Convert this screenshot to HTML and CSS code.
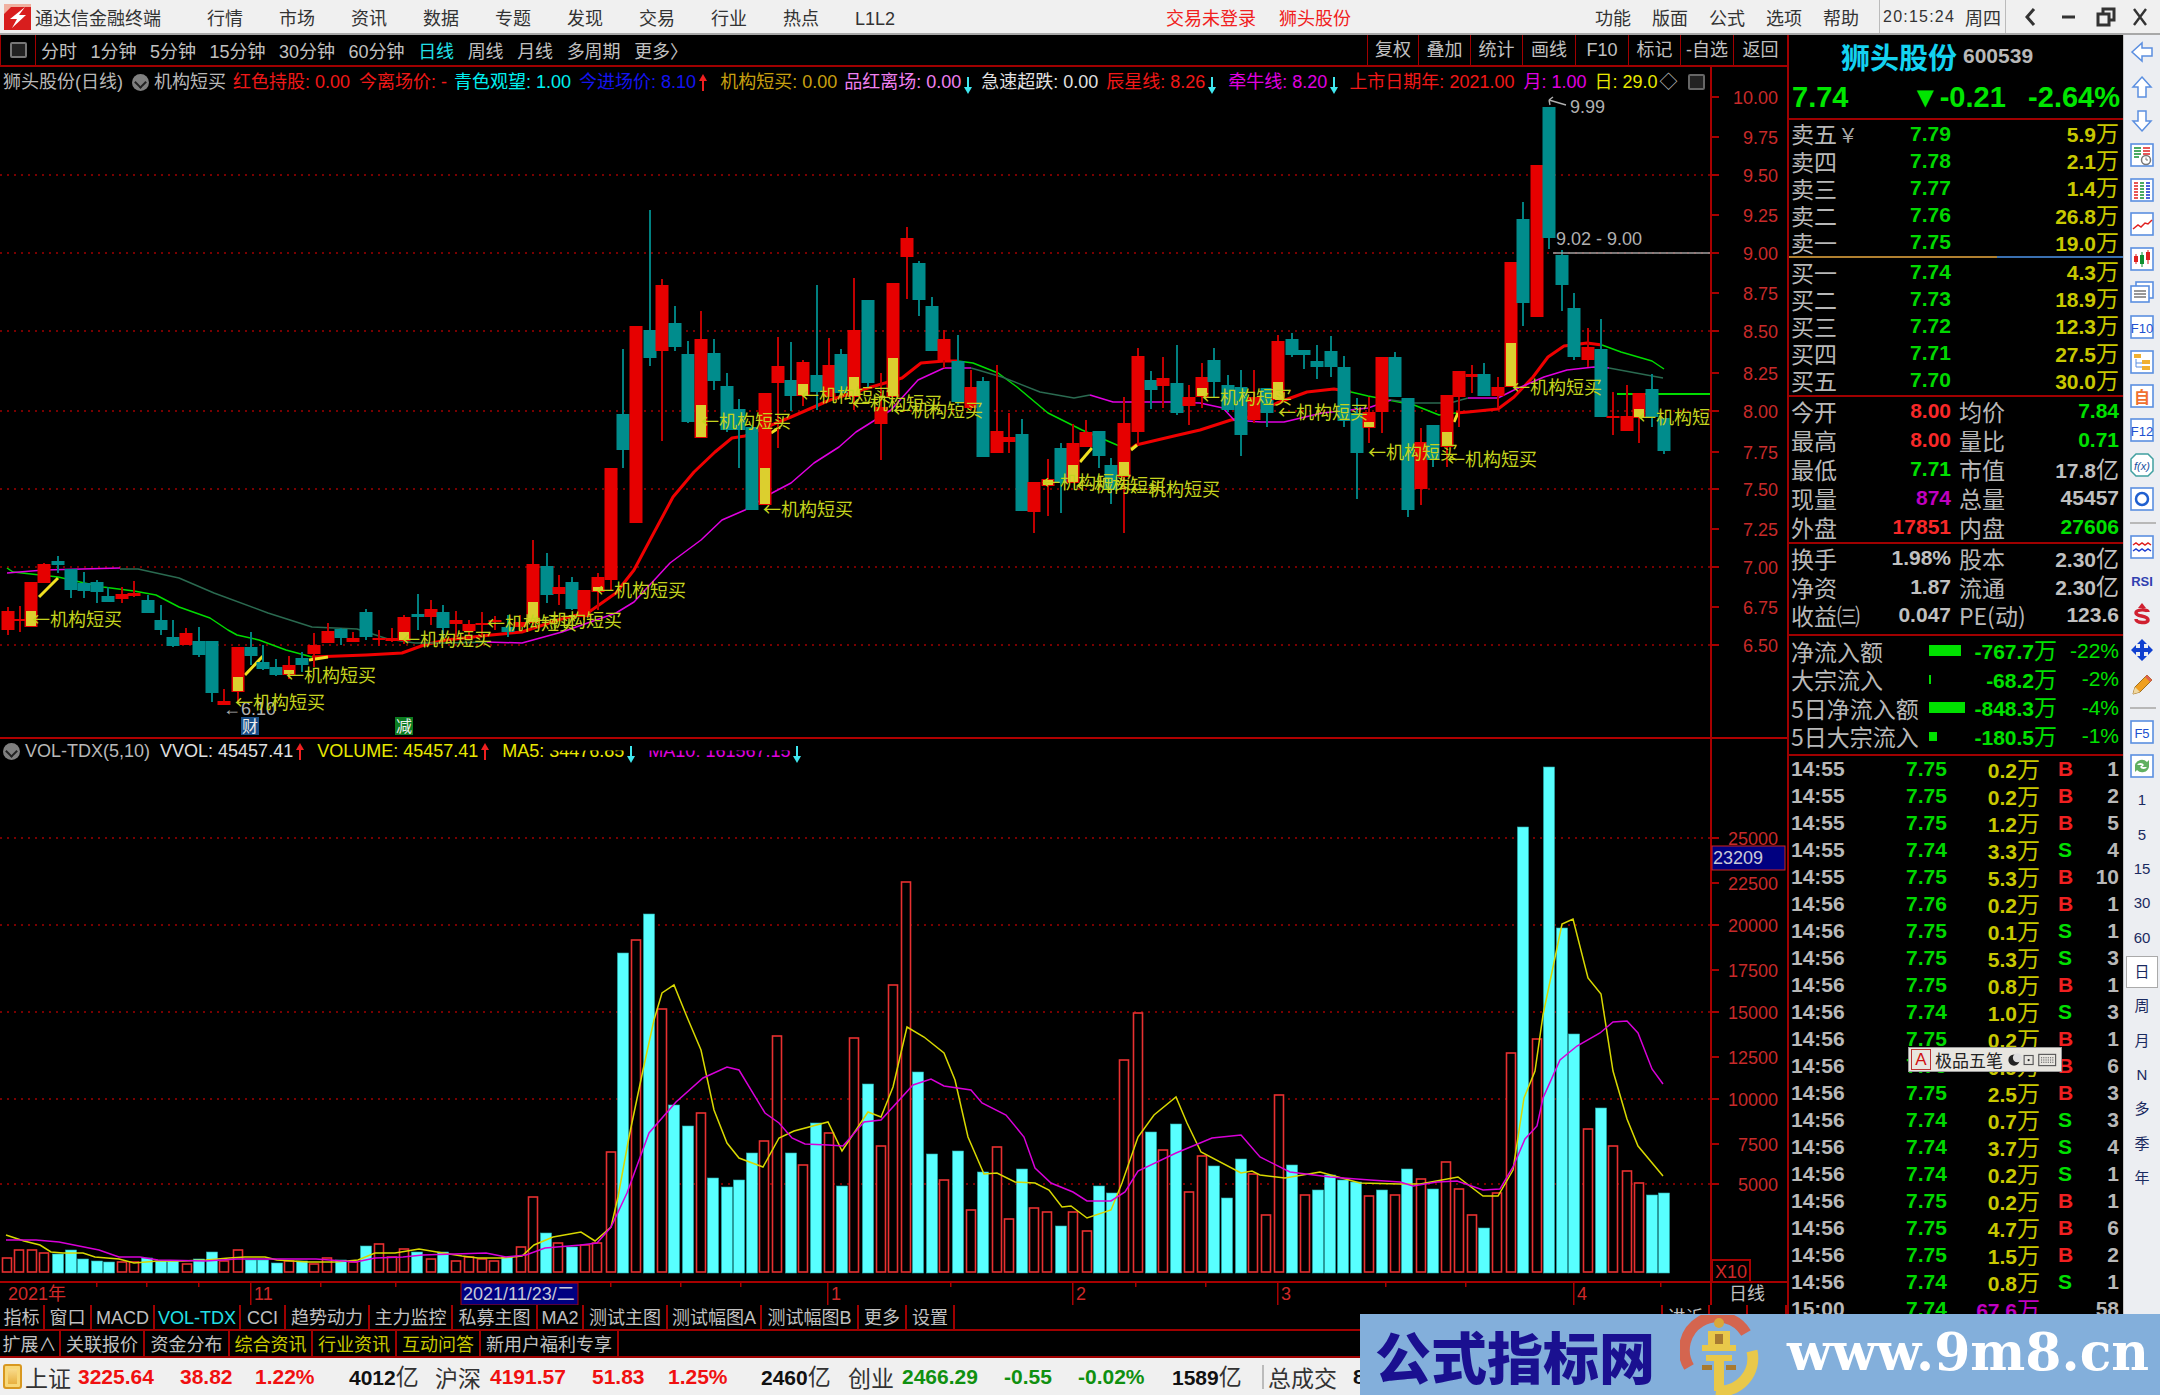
FILE: index.html
```html
<!DOCTYPE html>
<html lang="zh-CN">
<head>
<meta charset="utf-8">
<title>通达信金融终端</title>
<link rel="stylesheet" href="styles.css">
</head>
<body>
<header class="titlebar">
  <svg class="logo" viewBox="0 0 27 26"><rect width="27" height="26" fill="#d81e1e"/><path d="M0 0h27v3H7L0 10z" fill="#f0b0a0"/><path d="M21 3 6 15l7 0-5 9 14-13-7 0z" fill="#fff"/></svg>
  <span class="app">通达信金融终端</span>
  <nav class="menu"><span>行情</span><span>市场</span><span>资讯</span><span>数据</span><span>专题</span><span>发现</span><span>交易</span><span>行业</span><span>热点</span><span>L1L2</span></nav>
  <div class="alerts"><span>交易未登录</span><span>狮头股份</span></div>
  <nav class="menu right"><span>功能</span><span>版面</span><span>公式</span><span>选项</span><span>帮助</span></nav>
  <div class="clock"><span class="time">20:15:24</span><span>周四</span></div>
  <div class="winctl">
    <svg viewBox="0 0 130 24"><path d="M16 4 9 12l7 8" fill="none" stroke="#333" stroke-width="3"/><path d="M44 12h13" stroke="#333" stroke-width="3"/><path d="M80 9h11v11H80z M85 9V4h11v11h-5" fill="none" stroke="#333" stroke-width="3"/><path d="M116 4l12 16M128 4l-12 16" stroke="#333" stroke-width="2.4"/></svg>
  </div>
</header>

<div class="body-row">
  <section class="workspace">
    <div class="toolbar">
      <div class="tb-icon"><i></i></div>
      <div class="periods"><span>分时</span><span>1分钟</span><span>5分钟</span><span>15分钟</span><span>30分钟</span><span>60分钟</span><span class="on">日线</span><span>周线</span><span>月线</span><span>多周期</span><span>更多〉</span></div>
      <div class="tools"><span>复权</span><span>叠加</span><span>统计</span><span>画线</span><span>F10</span><span>标记</span><span>-自选</span><span>返回</span></div>
    </div>

    <div class="pane pane-main">
      <svg id="main" class="chart-main" viewBox="0 67 1787 670"></svg>
      <div class="legend">
        <span class="c-g l0">狮头股份(日线)</span><b class="dd"></b><span class="c-g">机构短买</span>
        <span class="c-r m7">红色持股: 0.00</span><span class="c-r m9">今离场价: -</span>
        <span class="c-c m7">青色观望: 1.00</span><span class="c-b m8">今进场价: 8.10</span><em class="up"></em>
        <span class="c-o m12">机构短买: 0.00</span><span class="c-p m7">品红离场: 0.00</span><em class="dn"></em>
        <span class="c-w m8">急速超跌: 0.00</span><span class="c-r m8">辰星线: 8.26</span><em class="dn"></em>
        <span class="c-m m11">牵牛线: 8.20</span><em class="dn"></em><span class="c-r m10">上市日期年: 2021.00</span>
        <span class="c-m m9">月: 1.00</span><span class="c-y m8">日: 29.0</span><span class="c-g m2">◇</span><b class="mini"><i></i></b>
      </div>
    </div>

    <div class="pane pane-vol">
      <svg id="vol" class="chart-vol" viewBox="0 739 1787 566"></svg>
      <div class="legend vol-legend">
        <b class="dd"></b><span class="c-g">VOL-TDX(5,10)</span>
        <span class="c-w m10">VVOL: 45457.41</span><em class="up"></em>
        <span class="c-y m12">VOLUME: 45457.41</span><em class="up"></em>
        <span class="c-y m12">MA5: <u class="cut">34476.85</u></span><em class="dn"></em>
        <span class="c-m m12"><u class="cut">MA10: 161567.15</u></span><em class="dn"></em>
      </div>
    </div>

    <div class="tabs tabs-a">
      <span>指标</span><span>窗口</span><span>MACD</span><span class="on">VOL-TDX</span><span>CCI</span><span>趋势动力</span><span>主力监控</span><span>私募主图</span><span>MA2</span><span>测试主图</span><span>测试幅图A</span><span>测试幅图B</span><span>更多</span><span>设置</span><span class="blank"></span><span>讲诉</span><span></span><span></span>
    </div>
    <div class="tabs tabs-b">
      <span>扩展∧</span><span>关联报价</span><span>资金分布</span><span class="hot">综合资讯</span><span class="hot">行业资讯</span><span class="hot">互动问答</span><span>新用户福利专享</span>
    </div>
  </section>

  <aside class="panel">
    <div class="stock"><span class="name">狮头股份</span><span class="code">600539</span></div>
    <div class="quote sec"><span>7.74</span><span class="chg">▼-0.21</span><span>-2.64%</span></div>

    <div class="book">
      <div class="bk"><span class="lb">卖五<small>￥</small></span><span class="pr">7.79</span><span class="am">5.9<i>万</i></span></div>
      <div class="bk"><span class="lb">卖四</span><span class="pr">7.78</span><span class="am">2.1<i>万</i></span></div>
      <div class="bk"><span class="lb">卖三</span><span class="pr">7.77</span><span class="am">1.4<i>万</i></span></div>
      <div class="bk"><span class="lb">卖二</span><span class="pr">7.76</span><span class="am">26.8<i>万</i></span></div>
      <div class="bk"><span class="lb">卖一</span><span class="pr">7.75</span><span class="am">19.0<i>万</i></span></div>
    </div>
    <div class="midline"></div>
    <div class="book buy sec">
      <div class="bk"><span class="lb">买一</span><span class="pr">7.74</span><span class="am">4.3<i>万</i></span></div>
      <div class="bk"><span class="lb">买二</span><span class="pr">7.73</span><span class="am">18.9<i>万</i></span></div>
      <div class="bk"><span class="lb">买三</span><span class="pr">7.72</span><span class="am">12.3<i>万</i></span></div>
      <div class="bk"><span class="lb">买四</span><span class="pr">7.71</span><span class="am">27.5<i>万</i></span></div>
      <div class="bk"><span class="lb">买五</span><span class="pr">7.70</span><span class="am">30.0<i>万</i></span></div>
    </div>

    <div class="stats s5 sec">
      <div class="st"><span class="lb">今开</span><span class="nv red">8.00</span><span class="lb k">均价</span><span class="nv grn">7.84</span></div>
      <div class="st"><span class="lb">最高</span><span class="nv red">8.00</span><span class="lb k">量比</span><span class="nv grn">0.71</span></div>
      <div class="st"><span class="lb">最低</span><span class="nv grn">7.71</span><span class="lb k">市值</span><span class="nv">17.8<i>亿</i></span></div>
      <div class="st"><span class="lb">现量</span><span class="nv mag">874</span><span class="lb k">总量</span><span class="nv">45457</span></div>
      <div class="st"><span class="lb">外盘</span><span class="nv red">17851</span><span class="lb k">内盘</span><span class="nv grn">27606</span></div>
    </div>
    <div class="stats s3 sec">
      <div class="st"><span class="lb">换手</span><span class="nv">1.98%</span><span class="lb k">股本</span><span class="nv">2.30<i>亿</i></span></div>
      <div class="st"><span class="lb">净资</span><span class="nv">1.87</span><span class="lb k">流通</span><span class="nv">2.30<i>亿</i></span></div>
      <div class="st"><span class="lb">收益㈢</span><span class="nv">0.047</span><span class="lb k">PE(动)</span><span class="nv">123.6</span></div>
    </div>
    <div class="flow sec">
      <div class="fl"><span class="lb">净流入额</span><b class="bar b1"></b><span class="nv grn">-767.7<i>万</i></span><span class="nv grn thin">-22%</span></div>
      <div class="fl"><span class="lb">大宗流入</span><b class="bar b2"></b><span class="nv grn">-68.2<i>万</i></span><span class="nv grn thin">-2%</span></div>
      <div class="fl"><span class="lb">5日净流入额</span><b class="bar b3"></b><span class="nv grn">-848.3<i>万</i></span><span class="nv grn thin">-4%</span></div>
      <div class="fl"><span class="lb">5日大宗流入</span><b class="bar b4"></b><span class="nv grn">-180.5<i>万</i></span><span class="nv grn thin">-1%</span></div>
    </div>

    <div class="ticks">
      <div class="tk"><span>14:55</span><span class="g">7.75</span><span class="a">0.2<i>万</i></span><span class="f-b">B</span><span>1</span></div>
      <div class="tk"><span>14:55</span><span class="g">7.75</span><span class="a">0.2<i>万</i></span><span class="f-b">B</span><span>2</span></div>
      <div class="tk"><span>14:55</span><span class="g">7.75</span><span class="a">1.2<i>万</i></span><span class="f-b">B</span><span>5</span></div>
      <div class="tk"><span>14:55</span><span class="g">7.74</span><span class="a">3.3<i>万</i></span><span class="f-s">S</span><span>4</span></div>
      <div class="tk"><span>14:55</span><span class="g">7.75</span><span class="a">5.3<i>万</i></span><span class="f-b">B</span><span>10</span></div>
      <div class="tk"><span>14:56</span><span class="g">7.76</span><span class="a">0.2<i>万</i></span><span class="f-b">B</span><span>1</span></div>
      <div class="tk"><span>14:56</span><span class="g">7.75</span><span class="a">0.1<i>万</i></span><span class="f-s">S</span><span>1</span></div>
      <div class="tk"><span>14:56</span><span class="g">7.75</span><span class="a">5.3<i>万</i></span><span class="f-s">S</span><span>3</span></div>
      <div class="tk"><span>14:56</span><span class="g">7.75</span><span class="a">0.8<i>万</i></span><span class="f-b">B</span><span>1</span></div>
      <div class="tk"><span>14:56</span><span class="g">7.74</span><span class="a">1.0<i>万</i></span><span class="f-s">S</span><span>3</span></div>
      <div class="tk"><span>14:56</span><span class="g">7.75</span><span class="a">0.2<i>万</i></span><span class="f-b">B</span><span>1</span></div>
      <div class="tk"><span>14:56</span><span class="g">7.75</span><span class="a">0.9<i>万</i></span><span class="f-b">B</span><span>6</span></div>
      <div class="tk"><span>14:56</span><span class="g">7.75</span><span class="a">2.5<i>万</i></span><span class="f-b">B</span><span>3</span></div>
      <div class="tk"><span>14:56</span><span class="g">7.74</span><span class="a">0.7<i>万</i></span><span class="f-s">S</span><span>3</span></div>
      <div class="tk"><span>14:56</span><span class="g">7.74</span><span class="a">3.7<i>万</i></span><span class="f-s">S</span><span>4</span></div>
      <div class="tk"><span>14:56</span><span class="g">7.74</span><span class="a">0.2<i>万</i></span><span class="f-s">S</span><span>1</span></div>
      <div class="tk"><span>14:56</span><span class="g">7.75</span><span class="a">0.2<i>万</i></span><span class="f-b">B</span><span>1</span></div>
      <div class="tk"><span>14:56</span><span class="g">7.75</span><span class="a">4.7<i>万</i></span><span class="f-b">B</span><span>6</span></div>
      <div class="tk"><span>14:56</span><span class="g">7.75</span><span class="a">1.5<i>万</i></span><span class="f-b">B</span><span>2</span></div>
      <div class="tk"><span>14:56</span><span class="g">7.74</span><span class="a">0.8<i>万</i></span><span class="f-s">S</span><span>1</span></div>
      <div class="tk"><span>15:00</span><span class="g">7.74</span><span class="a m">67.6<i>万</i></span><span></span><span>58</span></div>
    </div>
  </aside>

  <aside class="sidebar">
    <div class="si"><svg viewBox="0 0 24 24"><path class="ar" d="M2 12l10-9v5h10v8H12v5z"/></svg></div>
    <div class="si"><svg viewBox="0 0 24 24"><path class="ar" d="M12 2l9 10h-5v10H8V12H3z"/></svg></div>
    <div class="si"><svg viewBox="0 0 24 24"><path class="ar" d="M12 22l9-10h-5V2H8v10H3z"/></svg></div>
    <div class="si"><svg viewBox="0 0 24 24"><rect class="bx" x="1" y="1" width="22" height="22"/><path d="M4 5h7M4 8h7M4 11h7M4 14h5" stroke="#109030" stroke-width="1.5"/><path d="M13 5h7M13 8h7M13 11h7" stroke="#e02020" stroke-width="1.5"/><circle cx="16" cy="17" r="4.5" fill="#fff" stroke="#777" stroke-width="1.5"/><path d="M16 14.5V17l2 0" fill="none" stroke="#777"/></svg></div>
    <div class="si"><svg viewBox="0 0 24 24"><rect class="bx" x="1" y="1" width="22" height="22"/><path d="M4 5h4M4 8h4M4 11h4M4 14h4M4 17h4M4 20h4" stroke="#e02020" stroke-width="1.5"/><path d="M10 5h4M10 8h4M10 11h4M10 14h4M10 17h4M10 20h4" stroke="#109030" stroke-width="1.5"/><path d="M16 5h4M16 8h4M16 11h4M16 14h4M16 17h4M16 20h4" stroke="#1030d0" stroke-width="1.5"/></svg></div>
    <div class="si"><svg viewBox="0 0 24 24"><rect class="bx" x="1" y="1" width="22" height="22"/><path d="M3 17l5-4 3 2 4-4 3 1 4-4" fill="none" stroke="#e02020" stroke-width="1.5"/></svg></div>
    <div class="si"><svg viewBox="0 0 24 24"><rect class="bx" x="1" y="1" width="22" height="22"/><path d="M6 7v10M18 3v14" stroke="#e02020"/><path d="M12 5v15" stroke="#109030"/><rect x="4" y="9" width="4" height="6" fill="#e02020"/><rect x="10" y="8" width="4" height="9" fill="#109030"/><rect x="16" y="5" width="4" height="8" fill="#e02020"/></svg></div>
    <div class="si"><svg viewBox="0 0 24 24"><rect class="bx" x="6" y="1" width="17" height="16"/><rect class="bx" x="1" y="5" width="18" height="16"/><path d="M4 10h12M4 13h12M4 16h12" stroke="#777" stroke-width="1.5"/></svg></div>
    <div class="si"><svg viewBox="0 0 24 24"><rect class="bx" x="1" y="1" width="22" height="22"/><text class="it" x="12" y="17.5">F10</text></svg></div>
    <div class="si"><svg viewBox="0 0 24 24"><rect class="bx" x="1" y="1" width="22" height="22"/><path d="M6 9v8h6M6 13h6" fill="none" stroke="#5b8fe0"/><rect x="4" y="4" width="7" height="4" fill="#f0b030"/><rect x="12" y="10" width="8" height="4" fill="#f0b030"/><rect x="12" y="16" width="8" height="4" fill="#f0b030"/></svg></div>
    <div class="si"><svg viewBox="0 0 24 24"><rect class="bx" x="1" y="1" width="22" height="22"/><text class="it o" x="12" y="19">自</text></svg></div>
    <div class="si"><svg viewBox="0 0 24 24"><rect class="bx" x="1" y="1" width="22" height="22"/><text class="it" x="12" y="17.5">F12</text></svg></div>
    <div class="si"><svg viewBox="0 0 24 24"><path d="M6 1h12l5 5v12l-5 5H6l-5-5V6z" fill="#fff" stroke="#40a0a0" stroke-width="1.5"/><text class="it fx" x="12" y="17">f(x)</text></svg></div>
    <div class="si"><svg viewBox="0 0 24 24"><rect class="bx" x="1" y="1" width="22" height="22"/><circle cx="12" cy="12" r="6" fill="none" stroke="#2060d0" stroke-width="2.5"/></svg></div>
    <div class="sep"></div>
    <div class="si"><svg viewBox="0 0 24 24"><rect class="bx" x="1" y="1" width="22" height="22"/><path d="M3 10l3-2 3 2 3-2 3 2 3-2 3 2" fill="none" stroke="#e02020" stroke-width="1.5"/><path d="M3 16l3-2 3 2 3-2 3 2 3-2 3 2" fill="none" stroke="#2040d0" stroke-width="1.5"/></svg></div>
    <div class="si"><svg viewBox="0 0 24 24"><text class="it rsi" x="12" y="17">RSI</text></svg></div>
    <div class="si"><svg viewBox="0 0 24 24"><path d="M18 9c0-3-12-3-12 1 0 4 12 2 12 7 0 4-12 3-12-1" fill="none" stroke="#d02030" stroke-width="3.5"/><path d="M8 5l4-5 4 5z" fill="#d02030"/></svg></div>
    <div class="si"><svg viewBox="0 0 24 24"><path d="M12 1l5 5h-3v4h4V7l5 5-5 5v-3h-4v4h3l-5 5-5-5h3v-4H6v3l-5-5 5-5v3h4V6H7z" fill="#1040d0"/></svg></div>
    <div class="si"><svg viewBox="0 0 24 24"><path d="M3 22l2-7L17 3l5 5L10 20z" fill="#f0a020" stroke="#a07020"/><path d="M3 22l2-7 5 5z" fill="#f0d8a0"/><path d="M17 3l5 5-2 2-5-5z" fill="#e06050"/></svg></div>
    <div class="sep"></div>
    <div class="si"><svg viewBox="0 0 24 24"><rect class="bx" x="1" y="1" width="22" height="22"/><text class="it" x="12" y="17.5">F5</text></svg></div>
    <div class="si"><svg viewBox="0 0 24 24"><rect class="bx" x="1" y="1" width="22" height="22"/><path d="M5 11a7 7 0 0 1 12-3l2-2v7h-7l2-2a4 4 0 0 0-7 0zM19 13a7 7 0 0 1-12 3l-2 2v-7h7l-2 2a4 4 0 0 0 7 0z" fill="#60b060"/></svg></div>
    <div class="nt">1</div><div class="nt">5</div><div class="nt">15</div><div class="nt">30</div><div class="nt">60</div>
    <div class="nt cur">日</div><div class="nt">周</div><div class="nt">月</div><div class="nt">N</div><div class="nt">多</div><div class="nt">季</div><div class="nt">年</div>
  </aside>
</div>

<footer class="statusbar">
  <span class="sico"></span>
  <span class="sl">上证</span><span class="sn r">3225.64</span><span class="sn r">38.82</span><span class="sn r">1.22%</span><span class="sn k">4012<i>亿</i></span>
  <span class="sl">沪深</span><span class="sn r">4191.57</span><span class="sn r">51.83</span><span class="sn r">1.25%</span><span class="sn k">2460<i>亿</i></span>
  <span class="sl">创业</span><span class="sn g">2466.29</span><span class="sn g">-0.55</span><span class="sn g">-0.02%</span><span class="sn k">1589<i>亿</i></span>
  <span class="sl tot">总成交</span><span class="sn k">8</span>
</footer>

<div class="ime"><b>A</b><span>极品五笔</span><svg viewBox="0 0 44 16"><circle cx="6" cy="8" r="5" fill="#222"/><circle cx="9" cy="6" r="4" fill="#ddd"/><rect x="15" y="4" width="8" height="8" fill="none" stroke="#555"/><circle cx="19" cy="8" r="1" fill="#222"/><rect x="28" y="3" width="15" height="10" fill="none" stroke="#555"/><path d="M30 6h11M30 8h11M30 10h11" stroke="#555" stroke-dasharray="1 1"/></svg></div>

<div class="watermark">
  <span class="wm-cn">公式指标网</span>
  <svg class="wm-logo" viewBox="0 0 80 80">
    <path d="M9 52A33 33 0 0 1 66 18" fill="none" stroke="#d4654f" stroke-width="11"/>
    <path d="M72 36A33 33 0 0 1 36 76" fill="none" stroke="#e9c84a" stroke-width="11"/>
    <circle cx="39" cy="8" r="5" fill="#d9a83a"/>
    <path d="M28 16h22v14h6v6H22v-6h6zM26 40h26v6H26zM34 46h10v30H34z" fill="#e9c84a"/>
    <path d="M35 19h8v10h-8zM22 50h10v5H22zM46 50h10v5H46z" fill="#a87a30"/>
  </svg>
  <span class="wm-url">www.9m8.cn</span>
</div>
<script src="chart.js"></script>
</body>
</html>
```
FILE: styles.css
```css
* { box-sizing: border-box; }
html, body { margin: 0; padding: 0; }
body {
  position: relative; width: 2160px; height: 1395px; overflow: hidden; background: #000;
  font-family: "Liberation Sans", "Noto Sans CJK SC", sans-serif; font-size: 18px; color: #c0c0c0;
  display: flex; flex-direction: column;
}
i, em, u { font-style: normal; text-decoration: none; }

/* title bar */
.titlebar { height: 35px; flex: none; background: #f0f0f0; border-bottom: 2px solid #a8a8a8; display: flex; align-items: center; color: #333; }
.logo { width: 27px; height: 26px; margin-left: 4px; flex: none; }
.app { margin-left: 4px; }
.menu { display: flex; align-items: baseline; gap: 36px; margin-left: 46px; }
.menu.right { margin-left: auto; gap: 21px; }
.alerts { display: flex; gap: 23px; margin-left: 271px; color: #f02020; }
.clock { display: flex; gap: 10px; margin-left: 20px; padding: 0 4px 0 3px; height: 33px; align-items: center; border-left: 1px solid #bbb; border-right: 1px solid #bbb; }
.time { font-size: 16px; letter-spacing: 1.2px; }
.winctl { width: 154px; flex: none; }
.winctl svg { display: block; width: 130px; height: 24px; margin-left: 12px; }

.body-row { flex: none; height: 1323px; display: flex; }
.workspace { width: 1787px; flex: none; display: flex; flex-direction: column; }

/* toolbar */
.toolbar { height: 32px; flex: none; display: flex; align-items: center; border-bottom: 2px solid #a00000; }
.tb-icon { width: 36px; height: 30px; flex: none; border-left: 1px solid #a00000; border-right: 1px solid #a00000; display: flex; align-items: center; justify-content: center; }
.tb-icon i { width: 17px; height: 16px; border: 2px solid #777; border-radius: 2px; background: #222; display: block; }
.periods { display: flex; gap: 13.5px; margin-left: 5px; }
.periods .on { color: #22e0e8; }
.tools { display: grid; grid-template-columns: 51px 52px 52px 53px 53px 52px 53px 54px; margin-left: auto; height: 30px; }
.tools span { border-left: 1px solid #a00000; text-align: center; line-height: 30px; }

/* chart panes */
.pane { position: relative; flex: none; }
.pane-main { height: 672px; border-bottom: 2px solid #b00000; }
.pane-vol { height: 566px; }
.pane svg { display: block; width: 1787px; }
.chart-main { height: 670px; }
.chart-vol { height: 566px; }
.legend { position: absolute; left: 3px; top: 5px; display: flex; align-items: center; white-space: nowrap; line-height: 20px; }
.vol-legend { top: 2px; }
.c-g { color: #b8b8b8; } .c-r { color: #f01818; } .c-c { color: #00f0f0; } .c-b { color: #1414f0; }
.c-o { color: #c8a010; } .c-p { color: #f080f0; } .c-w { color: #e0e0e0; } .c-m { color: #e000e0; } .c-y { color: #e8e800; }
.l0 { margin-right: 9px; }
.m2 { margin-left: 2px; } .m7 { margin-left: 7px; } .m8 { margin-left: 8px; } .m9 { margin-left: 9px; } .m10 { margin-left: 10px; } .m11 { margin-left: 11px; } .m12 { margin-left: 12px; }
.up, .dn { display: block; position: relative; width: 2px; height: 14px; margin: 3px 4px 0 6px; background: currentColor; flex: none; }
.up { color: #f02020; } .dn { color: #40e8f0; }
.up::after { content: ""; position: absolute; left: -3px; top: -3px; border-left: 4px solid transparent; border-right: 4px solid transparent; border-bottom: 7px solid currentColor; }
.dn::after { content: ""; position: absolute; left: -3px; bottom: -3px; border-left: 4px solid transparent; border-right: 4px solid transparent; border-top: 7px solid currentColor; }
.cut { display: inline-block; clip-path: inset(48% 0 0 0); }
.dd { width: 17px; height: 17px; border-radius: 50%; background: #808080; margin-right: 5px; position: relative; flex: none; }
.dd::after { content: ""; position: absolute; left: 4px; top: 4px; width: 7px; height: 7px; border-right: 2px solid #222; border-bottom: 2px solid #222; transform: rotate(45deg); }
.mini { margin-left: 10px; width: 17px; height: 16px; border: 2px solid #666; border-radius: 2px; background: #222; display: block; position: relative; }

/* svg text */
.t-ax { font: 18px "Liberation Sans", sans-serif; fill: #c82a2a; text-anchor: end; }
.t-date { font: 18px "Liberation Sans", "Noto Sans CJK SC", sans-serif; fill: #d02828; }
.t-lbl { font: 18px "Noto Sans CJK SC", sans-serif; fill: #c4d41e; }
.t-note { font: 18px "Liberation Sans", sans-serif; fill: #b0b0b0; }
.t-flag { font: 16px "Noto Sans CJK SC", sans-serif; fill: #eee; text-anchor: middle; }
.t-cyc { font: 18px "Noto Sans CJK SC", sans-serif; fill: #c0c0c0; text-anchor: middle; }
.t-hl { font: 18px "Liberation Sans", "Noto Sans CJK SC", sans-serif; fill: #c8c8d8; }

/* tabs */
.tabs { display: grid; height: 26px; flex: none; border-bottom: 2px solid #a00000; line-height: 20px; text-align: center; white-space: nowrap; }
.tabs span { border-right: 2px solid #a00000; overflow: hidden; padding-top: 3px; }
.tabs-a { grid-template-columns: 45px 47px 63px 86px 45px 84px 83px 85px 46px 84px 94px 97px 48px 48px 708px 47px 38px 39px; }
.tabs-b { grid-template-columns: 61px 84px 85px 83px 84px 84px 138px; height: 27px; }
.tabs-b span { padding-top: 4px; }
.tabs .on { color: #22e0e8; }
.tabs .hot { color: #c8c800; }

/* right panel */
.panel { width: 336px; flex: none; border-left: 2px solid #a00000; display: flex; flex-direction: column; overflow: hidden; font: 23px/20px "Noto Sans CJK SC", sans-serif; }
.sec { border-bottom: 2px solid #a00000; }
.stock { height: 46px; flex: none; display: flex; align-items: center; padding: 0 0 4px 52px; gap: 6px; }
.name { color: #14d2f0; font-size: 29px; line-height: 30px; font-weight: 700; }
.code { font: bold 21px/20px "Liberation Sans", sans-serif; color: #b8b8b8; }
.quote { height: 39px; flex: none; display: grid; grid-template-columns: 119px 106px 103px; padding: 0 4px 6px 3px; align-items: center; font: bold 29px/30px "Liberation Sans", sans-serif; color: #00e600; }
.quote span:last-child { text-align: right; }
.book { flex: none; }
.bk { height: 27.2px; display: grid; grid-template-columns: 119px 60px 149px; padding: 0 4px 0 2px; align-items: center; }
.lb { color: #b8b8b8; white-space: nowrap; }
.lb small { font-size: 20px; margin-left: 1px; color: #aaa; }
.pr { font: bold 21px/20px "Liberation Sans", sans-serif; color: #00d800; }
.am { font: bold 21px/20px "Liberation Sans", sans-serif; color: #c8c800; text-align: right; }
.am i, .nv i, .tk i { font: 23px/20px "Noto Sans CJK SC", sans-serif; }
.midline { height: 2px; flex: none; background: linear-gradient(90deg, #b08030 0 208px, #3a70b0 208px); }
.buy { padding: 0 0 1px; }
.st { display: grid; grid-template-columns: 90px 70px 68px 100px; padding: 0 4px 0 2px; align-items: center; }
.s5 .st { height: 29px; }
.s3 { padding-bottom: 5px; }
.s3 .st { height: 28.5px; }
.k { padding-left: 8px; }
.nv { font: bold 21px/20px "Liberation Sans", sans-serif; color: #c0c0c0; text-align: right; white-space: nowrap; }
.red { color: #f82828; } .grn { color: #00e000; } .mag { color: #c000c0; }
.flow { padding-bottom: 3px; }
.fl { height: 28.6px; display: grid; grid-template-columns: 138px 40px 88px 62px; padding: 0 4px 0 2px; align-items: center; }
.thin { font-weight: 400; }
.bar { display: block; background: #00e000; height: 11px; }
.b1 { width: 32px; } .b2 { width: 2px; height: 9px; } .b3 { width: 36px; } .b4 { width: 8px; height: 9px; }
.ticks { flex: 1; overflow: hidden; }
.tk { height: 27px; display: grid; grid-template-columns: 115px 60px 74px 38px 41px; padding: 0 4px 0 2px; align-items: center; font: bold 21px/20px "Liberation Sans", sans-serif; color: #b8b8b8; }
.tk .g { color: #00d800; }
.tk .a { color: #c8c800; text-align: right; }
.tk .a.m { color: #c000c0; }
.tk span:last-child { text-align: right; }
.f-b { color: #f02020; padding-left: 18px; }
.f-s { color: #00e000; padding-left: 18px; }

/* icon rail */
.sidebar { width: 37px; flex: none; background: #eceef2; border-left: 1px solid #c8c8c8; display: flex; flex-direction: column; }
.si { height: 34.4px; flex: none; display: flex; align-items: center; justify-content: center; }
.si svg { width: 24px; height: 24px; display: block; }
.ar { fill: #fff; stroke: #5b8fe0; stroke-width: 1.5; }
.bx { fill: #fff; stroke: #5b8fe0; stroke-width: 1.6; }
.it { font: 13px "Liberation Sans", sans-serif; fill: #2050d0; text-anchor: middle; }
.it.o { font: bold 16px "Noto Sans CJK SC", sans-serif; fill: #f07030; }
.it.fx { font: italic 11px "Liberation Sans", sans-serif; fill: #1850a0; }
.it.rsi { font: bold 13px "Liberation Sans", sans-serif; fill: #3040b0; }
.sep { height: 13px; flex: none; position: relative; }
.sep::after { content: ""; position: absolute; left: 6px; right: 4px; top: 6px; height: 2px; background: #b8b8b8; }
.nt { height: 34.4px; flex: none; text-align: center; font: 15px/34px "Liberation Sans", "Noto Sans CJK SC", sans-serif; color: #1a2a60; }
.nt.cur { height: 32px; line-height: 30px; margin: 1px 2px; background: #fff; border: 1px solid #aaa; }

/* status bar */
.statusbar { flex: 1; background: #f0f0f0; display: grid; grid-template-columns: 25px 53px 102px 75px 86px 94px 55px 102px 76px 85px 95px 54px 102px 74px 86px 98px 83px 40px; align-items: center; white-space: nowrap; font-size: 21px; }
.sico { width: 19px; height: 25px; margin-left: 3px; background: linear-gradient(#fbe39a, #e5a830); border: 2px solid #d89820; border-radius: 3px; box-shadow: inset 0 0 0 3px #f8d878; }
.sl { font: 23px/24px "Noto Sans CJK SC", sans-serif; color: #333; }
.tot { border-left: 2px solid #bbb; padding-left: 4px; }
.sn { font: bold 21px/24px "Liberation Sans", sans-serif; }
.sn i { font: 23px/24px "Noto Sans CJK SC", sans-serif; color: #333; }
.sn.r { color: #f01010; } .sn.g { color: #109010; } .sn.k { color: #111; }

/* floating */
.ime { position: absolute; left: 1908px; top: 1047px; width: 154px; height: 25px; background: #e8e6e0; border: 1px solid #999; display: flex; align-items: center; font-size: 17px; color: #222; padding-left: 2px; }
.ime b { width: 20px; height: 21px; border: 1px solid #b33; color: #d01010; text-align: center; line-height: 20px; font-size: 17px; font-weight: 400; margin-right: 4px; }
.ime svg { width: 50px; height: 18px; margin-left: 4px; }
.watermark { position: absolute; left: 1360px; top: 1314px; right: 0; bottom: 0; background: #83afdb; display: flex; align-items: center; }
.wm-cn { margin-left: 15px; font: 900 56px/60px "Noto Sans CJK SC", sans-serif; color: #1a1090; white-space: nowrap; }
.wm-logo { width: 80px; height: 80px; margin-left: 25px; flex: none; }
.wm-url { margin-left: 27px; padding-bottom: 6px; font: bold 52px/60px "DejaVu Serif", serif; color: #fff; white-space: nowrap; }
```
FILE: chart.js
```js
const NS = 'http://www.w3.org/2000/svg';
function add(svg, tag, attrs, text) {
  const e = document.createElementNS(NS, tag);
  for (const k in attrs) e.setAttribute(k, attrs[k]);
  if (text !== undefined) e.textContent = text;
  svg.appendChild(e);
  return e;
}
const main = document.getElementById('main');
const vol = document.getElementById('vol');
const AXIS = '#a80000';

/* candles: x, body top, body bottom, wick top, wick bottom, colour, yellow top */
const C = [
[8,611,630,607,635,'r'],[20,619,621,606,632,'r'],[31,582,627,582,627,'r',611],[44,564,583,563,583,'r'],[58,561,565,556,573,'t'],
[71,569,590,569,598,'t'],[84,583,591,572,598,'t'],[97,582,592,580,603,'t'],[108,596,602,587,602,'t'],[122,594,599,587,603,'r'],
[134,593,596,581,597,'r'],[148,600,613,595,613,'t'],[161,620,630,605,635,'t'],[173,637,646,620,647,'t'],[186,633,645,628,645,'r'],
[199,641,655,627,657,'t'],[212,641,693,641,702,'t'],[224,701,705,689,705,'r'],[238,647,692,647,703,'r',677],[251,647,656,632,665,'t'],
[263,662,669,645,670,'t'],[276,667,675,659,676,'t'],[289,665,675,656,679,'r',670],[302,658,665,652,672,'t'],[314,645,654,633,667,'r'],
[328,631,643,623,643,'r'],[341,629,638,628,645,'t'],[353,638,642,632,642,'r'],[366,612,637,609,640,'t'],[379,638,640,630,646,'r'],
[392,638,641,628,642,'r'],[404,617,641,615,644,'r',632],[418,614,617,594,630,'t'],[431,609,617,600,625,'r'],[443,612,628,605,638,'t'],
[456,620,624,611,637,'r'],[469,624,631,620,638,'r'],[482,623,624,612,637,'r'],[495,620,622,616,630,'r'],[508,627,632,615,637,'t'],
[520,622,627,615,630,'r'],[533,564,623,540,630,'r',602],[547,566,595,553,603,'t'],[559,587,594,575,605,'r'],[572,582,609,577,610,'t'],
[584,590,617,590,620,'r'],[598,577,592,573,610,'r',587],[611,468,580,468,590,'r'],[623,414,450,349,468,'t'],[636,326,523,326,523,'r'],
[650,330,358,210,366,'t'],[662,285,351,279,441,'r'],[675,323,347,306,351,'t'],[688,354,422,341,423,'t'],[701,339,438,311,438,'r',405],
[714,353,381,339,390,'t'],[727,386,430,373,432,'t'],[739,409,430,399,468,'t'],[752,427,510,425,510,'t'],[765,393,505,393,505,'r',468],
[778,366,383,337,448,'r'],[791,380,396,342,411,'t'],[803,362,396,360,406,'r',384],[817,375,392,285,410,'t'],[829,365,397,338,397,'r'],
[841,354,393,349,395,'t'],[854,330,397,278,410,'r',377],[868,300,383,300,387,'t'],[881,407,424,373,460,'r'],[893,283,397,283,397,'r',358],
[907,238,257,227,299,'r'],[919,263,300,261,316,'t'],[932,306,351,297,351,'t'],[944,339,360,330,368,'r'],[958,361,402,335,405,'t'],
[971,387,408,370,410,'r'],[983,381,457,377,457,'t'],[997,431,453,365,453,'r'],[1009,437,442,413,453,'r'],[1022,434,511,419,511,'t'],
[1034,482,512,482,533,'r'],[1048,479,486,459,516,'r',480],[1061,448,483,443,513,'t'],[1073,443,483,424,483,'r',465],[1086,432,447,420,447,'r'],
[1099,431,456,431,468,'t'],[1111,465,490,458,504,'t'],[1124,423,477,397,533,'r',462],[1138,356,432,348,445,'r'],[1151,380,390,371,409,'t'],
[1163,378,386,357,408,'r'],[1177,383,413,345,415,'t'],[1189,397,406,385,425,'r'],[1202,377,397,363,408,'r',388],[1214,360,382,348,398,'t'],
[1228,385,410,375,412,'t'],[1241,387,435,370,456,'t'],[1254,397,420,370,423,'r'],[1267,388,413,388,427,'t'],[1278,341,400,335,400,'r',382],
[1292,339,355,333,357,'t'],[1304,350,355,350,369,'t'],[1317,361,367,345,379,'t'],[1331,351,367,336,377,'t'],[1344,367,421,356,427,'t'],
[1357,413,453,398,499,'t'],[1369,412,428,397,443,'r',422],[1382,357,412,357,433,'r'],[1395,357,397,352,397,'t'],[1408,398,510,398,517,'t'],
[1421,442,489,428,505,'r'],[1433,425,460,425,467,'t'],[1447,395,447,395,467,'r',432],[1459,371,397,371,427,'r'],[1472,374,377,365,393,'r'],
[1484,374,396,363,396,'t'],[1498,387,396,377,408,'r'],[1511,262,387,262,387,'r',343],[1523,219,303,202,326,'t'],[1537,165,317,165,317,'r'],
[1549,107,238,107,249,'t'],[1562,255,285,250,311,'t'],[1574,308,357,293,360,'t'],[1588,347,360,328,367,'r'],[1601,349,417,319,417,'t'],
[1613,416,417,392,435,'r'],[1627,416,431,385,431,'r'],[1639,393,418,393,443,'r',409],[1652,389,417,374,427,'t'],[1664,418,451,418,454,'t']
];

/* moving averages, in page pixels */
const LINES = [
['#00dc00',1.5,'7,568 13,572 58,577 80,582 103,587 134,591 156,595 179,607 210,618 228,630 237,635 259,640 286,650 312,657'],
['#f00000',3,'312,657 366,655 402,653 424,645 446,640 491,635 522,632 558,620 589,612 616,593 634,570 650,540 673,497 694,472 715,452 732,438 745,436 791,417 830,400 868,388 902,378 921,363 944,361 958,361'],
['#00dc00',1.5,'958,361 973,363 998,373 1017,387 1048,413 1082,430 1117,445 1132,448'],
['#f00000',3,'1132,448 1136,445 1174,436 1200,430 1231,420 1246,418 1277,403 1307,392 1334,389 1351,392'],
['#00dc00',1.5,'1351,392 1368,396 1414,405 1439,415 1456,413'],
['#f00000',3,'1456,413 1468,412 1498,409 1514,397 1533,377 1548,357 1564,346 1587,343 1602,345'],
['#00dc00',1.5,'1602,345 1621,352 1652,361 1664,369'],
['#e000e0',1.5,'7,573 44,570 120,568'],
['#2a6a50',1.5,'120,569 138,569 179,578 214,593 268,613 312,627 357,629 388,639 415,643 446,643 487,642'],
['#e000e0',1.5,'487,642 522,643 562,632 616,613 634,602 670,563 701,540 722,520 745,510 772,493 791,483 814,463 839,447 856,432 891,410 918,380 944,368 971,368'],
['#2a6a50',1.5,'971,368 1002,377 1040,392 1074,398 1090,395'],
['#e000e0',1.5,'1090,395 1113,402 1170,402 1200,403 1223,408 1234,420 1261,422 1284,422 1322,413 1368,408 1391,400'],
['#2a6a50',1.5,'1391,400 1414,403 1450,403 1468,398'],
['#e000e0',1.5,'1468,398 1498,398 1514,390 1544,377 1567,370 1594,367 1609,368'],
['#2a6a50',1.5,'1609,368 1636,373 1663,378'],
['#00dc00',2,'1617,394 1710,394']
];
const STROKES = [[39,597,58,578],[245,675,263,656],[309,660,328,657],[771,433,780,427],[1080,462,1092,448],[1131,450,1137,445],[1454,422,1458,413]];

/* buy-signal labels: x, centre y */
const SIGNALS = [[32,619],[286,675],[235,702],[402,639],[487,623],[532,620],[596,590],[701,421],[763,509],[801,395],[852,403],[893,410],[1042,482],[1076,485],[1130,489],[1202,397],[1278,412],[1368,452],[1447,459],[1512,387],[1638,417]];

/* clip */
const defs = add(main, 'defs', {});
const cp = add(defs, 'clipPath', {id: 'clipMain'});
add(cp, 'rect', {x: 0, y: 67, width: 1711, height: 670});

/* grid */
[253, 331, 411, 489, 567, 645, 175].forEach(y => add(main, 'path', {d: `M0 ${y}H1711`, stroke: '#a00000', 'stroke-width': 1.6, 'stroke-dasharray': '2 5'}));

/* moving averages sit behind the candles */
LINES.forEach(([c, w, p]) => add(main, 'polyline', {points: p, fill: 'none', stroke: c, 'stroke-width': w, 'stroke-linejoin': 'round'}));
STROKES.forEach(([a, b, c, d]) => add(main, 'line', {x1: a, y1: b, x2: c, y2: d, stroke: '#f0e020', 'stroke-width': 3}));

C.forEach(([x, t, b, wt, wb, col, yt]) => {
  const fill = col === 'r' ? '#e60000' : '#008c8c';
  add(main, 'rect', {x: x - 1, y: wt, width: 2, height: wb - wt, fill: col === 'r' ? '#c00000' : '#008080'});
  add(main, 'rect', {x: x - 6.5, y: t, width: 13, height: Math.max(b - t, 2), fill});
  if (yt) add(main, 'rect', {x: x - 5, y: yt, width: 10, height: b - yt - 1, fill: '#dccf2e'});
});

/* price axis */
add(main, 'rect', {x: 1710, y: 67, width: 2, height: 670, fill: AXIS});
[['10.00',97],['9.75',137],['9.50',175],['9.25',215],['9.00',253],['8.75',293],['8.50',331],['8.25',373],['8.00',411],['7.75',452],['7.50',489],['7.25',529],['7.00',567],['6.75',607],['6.50',645]].forEach(([s, y]) => {
  add(main, 'path', {d: `M1712 ${y}H1719`, stroke: AXIS, 'stroke-width': 2});
  add(main, 'text', {class: 't-ax', x: 1778, y: y + 6.5}, s);
});

/* notes */
add(main, 'path', {d: 'M1553 253H1710', stroke: '#a0a0a0', 'stroke-width': 1.6});
add(main, 'text', {class: 't-note', x: 1556, y: 245}, '9.02 - 9.00');
add(main, 'path', {d: 'M1549 100L1566 105M1549 100l4-3M1549 100l1 5', stroke: '#b0b0b0', 'stroke-width': 1.4, fill: 'none'});
add(main, 'text', {class: 't-note', x: 1570, y: 113}, '9.99');
add(main, 'text', {class: 't-note', x: 223, y: 715}, '←6.10');

const g = add(main, 'g', {'clip-path': 'url(#clipMain)'});
SIGNALS.forEach(([x, y]) => add(g, 'text', {class: 't-lbl', x, y: y + 6.5}, '←机构短买'));

add(main, 'rect', {x: 241, y: 717, width: 18, height: 18, fill: '#1a4f88'});
add(main, 'text', {class: 't-flag', x: 250, y: 732}, '财');
add(main, 'rect', {x: 395, y: 717, width: 18, height: 18, fill: '#0c7c20'});
add(main, 'text', {class: 't-flag', x: 404, y: 732}, '减');

/* volume bars: x, r/c, top */
const V = [
[7,'r',1258],[19,'r',1250],[32,'r',1250],[44,'r',1253],[58,'c',1254],[71,'c',1250],[83,'c',1259],[97,'c',1261],[109,'c',1262],[122,'r',1262],[134,'r',1262],
[147,'c',1258],[161,'c',1261],[173,'c',1261],[187,'r',1264],[199,'c',1259],[212,'c',1252],[224,'r',1261],[238,'r',1250],[251,'c',1260],[263,'c',1260],[277,'c',1263],
[289,'r',1261],[302,'c',1261],[314,'r',1264],[327,'r',1258],[341,'c',1260],[353,'r',1262],[366,'c',1246],[379,'r',1244],[392,'r',1257],[404,'r',1249],[417,'c',1252],
[431,'r',1259],[443,'c',1252],[456,'r',1261],[469,'r',1257],[482,'r',1259],[494,'r',1261],[507,'c',1257],[521,'r',1247],[533,'r',1197],[546,'c',1233],[558,'r',1243],
[572,'c',1247],[585,'r',1245],[597,'r',1243],[611,'r',1152],[623,'c',953],[636,'r',940],[649,'c',914],[662,'r',1009],[674,'c',1105],[688,'c',1126],[701,'r',1113],
[713,'c',1178],[727,'c',1187],[739,'c',1180],[752,'c',1153],[764,'r',1141],[777,'r',1036],[791,'c',1153],[803,'r',1165],[816,'c',1123],[829,'r',1133],[842,'c',1186],
[854,'r',1038],[868,'c',1084],[881,'r',1146],[893,'r',985],[906,'r',882],[918,'c',1072],[932,'c',1154],[944,'r',1180],[958,'c',1151],[971,'r',1210],[983,'c',1172],
[997,'r',1147],[1009,'r',1219],[1022,'c',1169],[1034,'r',1208],[1047,'r',1212],[1061,'c',1226],[1073,'r',1212],[1087,'r',1231],[1099,'c',1186],[1112,'c',1193],
[1124,'r',1060],[1138,'r',1013],[1151,'c',1132],[1163,'r',1150],[1176,'c',1124],[1189,'r',1192],[1202,'r',1156],[1214,'c',1166],[1227,'c',1198],[1241,'c',1159],[1253,'r',1174],
[1266,'r',1215],[1279,'r',1095],[1292,'c',1165],[1305,'r',1195],[1318,'c',1190],[1330,'c',1175],[1343,'c',1180],[1356,'c',1182],[1369,'r',1196],[1382,'c',1190],[1395,'r',1195],
[1407,'c',1169],[1421,'r',1179],[1433,'c',1189],[1446,'r',1162],[1459,'r',1189],[1472,'r',1215],[1484,'c',1228],[1497,'r',1193],[1511,'r',1053],[1523,'c',827],[1537,'r',1039],
[1549,'c',767],[1562,'c',928],[1574,'c',1034],[1588,'r',1129],[1601,'c',1108],[1613,'r',1146],[1627,'r',1171],[1639,'r',1183],[1652,'c',1195],[1664,'c',1193]
];
const BASE = 1272;
[838, 925, 1012, 1099, 1184].forEach(y => add(vol, 'path', {d: `M0 ${y}H1711`, stroke: '#a00000', 'stroke-width': 1.6, 'stroke-dasharray': '2 5'}));
V.forEach(([x, c, t]) => {
  if (c === 'r') add(vol, 'rect', {x: x - 4.5, y: t, width: 9, height: BASE - t, fill: '#000', stroke: '#e83030', 'stroke-width': 1.6});
  else add(vol, 'rect', {x: x - 5.5, y: t, width: 11, height: BASE - t + 1, fill: '#58ffff', stroke: '#28b0b0', 'stroke-width': .6});
});
const MA_Y = '6,1235 24,1241 40,1245 51,1252 63,1253 83,1253 95,1257 119,1259 134,1263 158,1261 182,1261 206,1260 229,1258 245,1257 265,1257 277,1260 308,1262 336,1262 358,1260 375,1253 395,1253 419,1249 443,1253 462,1256 478,1258 502,1258 522,1256 534,1245 553,1237 581,1232 595,1241 611,1227 618,1197 629,1137 643,1070 654,1020 662,993 674,985 687,1017 701,1050 714,1110 727,1143 739,1158 763,1167 779,1138 794,1131 828,1122 842,1151 868,1112 881,1117 893,1087 907,1027 924,1037 944,1053 955,1080 968,1137 984,1174 997,1173 1015,1182 1035,1183 1049,1190 1062,1207 1071,1206 1087,1218 1111,1210 1122,1183 1138,1137 1154,1115 1176,1097 1187,1123 1201,1152 1241,1173 1252,1171 1260,1175 1285,1178 1320,1172 1360,1183 1400,1184 1420,1184 1458,1177 1483,1196 1498,1196 1513,1170 1524,1098 1535,1071 1543,1015 1562,924 1573,919 1588,978 1601,994 1613,1071 1627,1119 1638,1146 1663,1176';
const MA_M = '6,1240 36,1240 59,1242 79,1246 99,1250 119,1257 140,1257 158,1260 206,1261 237,1259 316,1259 356,1262 375,1258 403,1257 423,1255 486,1253 506,1257 526,1255 545,1248 581,1245 597,1243 611,1227 627,1193 649,1133 676,1102 703,1078 727,1067 739,1070 765,1113 779,1123 792,1138 805,1144 828,1145 843,1146 864,1122 881,1120 913,1085 931,1079 944,1086 971,1090 982,1103 1006,1115 1024,1137 1035,1168 1051,1183 1073,1192 1087,1201 1111,1201 1125,1192 1138,1171 1176,1153 1212,1138 1241,1135 1260,1157 1290,1172 1330,1177 1370,1180 1400,1182 1413,1186 1437,1182 1457,1181 1483,1190 1500,1189 1513,1167 1525,1139 1537,1126 1543,1098 1560,1060 1577,1046 1600,1033 1613,1022 1627,1021 1638,1033 1652,1069 1663,1084';
add(vol, 'polyline', {points: MA_Y, fill: 'none', stroke: '#d8d800', 'stroke-width': 1.5});
add(vol, 'polyline', {points: MA_M, fill: 'none', stroke: '#d800d8', 'stroke-width': 1.5});

/* volume axis */
add(vol, 'rect', {x: 1710, y: 739, width: 2, height: 566, fill: AXIS});
[['25000',838],['22500',883],['20000',925],['17500',970],['15000',1012],['12500',1057],['10000',1099],['7500',1144],['5000',1184]].forEach(([s, y]) => {
  add(vol, 'path', {d: `M1712 ${y}H1719`, stroke: AXIS, 'stroke-width': 2});
  add(vol, 'text', {class: 't-ax', x: 1778, y: y + 6.5}, s);
});
add(vol, 'rect', {x: 1712, y: 846, width: 73, height: 24, fill: '#000080', stroke: '#d02020', 'stroke-width': 1});
add(vol, 'text', {class: 't-hl', x: 1713, y: 864}, '23209');
add(vol, 'rect', {x: 1712, y: 1260, width: 38, height: 22, fill: 'none', stroke: AXIS, 'stroke-width': 2});
add(vol, 'text', {class: 't-date', x: 1715, y: 1278}, 'X10');

/* date axis */
add(vol, 'rect', {x: 0, y: 1281, width: 1787, height: 2, fill: AXIS});
[[8,'2021年'],[254,'11'],[831,'1'],[1076,'2'],[1281,'3'],[1577,'4']].forEach(([x, s]) => {
  add(vol, 'text', {class: 't-date', x, y: 1300}, s);
  if (x > 10) add(vol, 'rect', {x: x - 4, y: 1283, width: 1.5, height: 22, fill: AXIS});
});
[96, 146, 198, 320, 395, 610, 680, 740, 950, 1135, 1205, 1385, 1465, 1660].forEach(x => add(vol, 'rect', {x, y: 1283, width: 1.5, height: 4, fill: AXIS}));
add(vol, 'rect', {x: 461, y: 1283, width: 117, height: 22, fill: '#000080', stroke: '#b00000', 'stroke-width': 1});
add(vol, 'text', {class: 't-hl', x: 463, y: 1300}, '2021/11/23/二');
add(vol, 'text', {class: 't-cyc', x: 1747, y: 1300}, '日线');
```
